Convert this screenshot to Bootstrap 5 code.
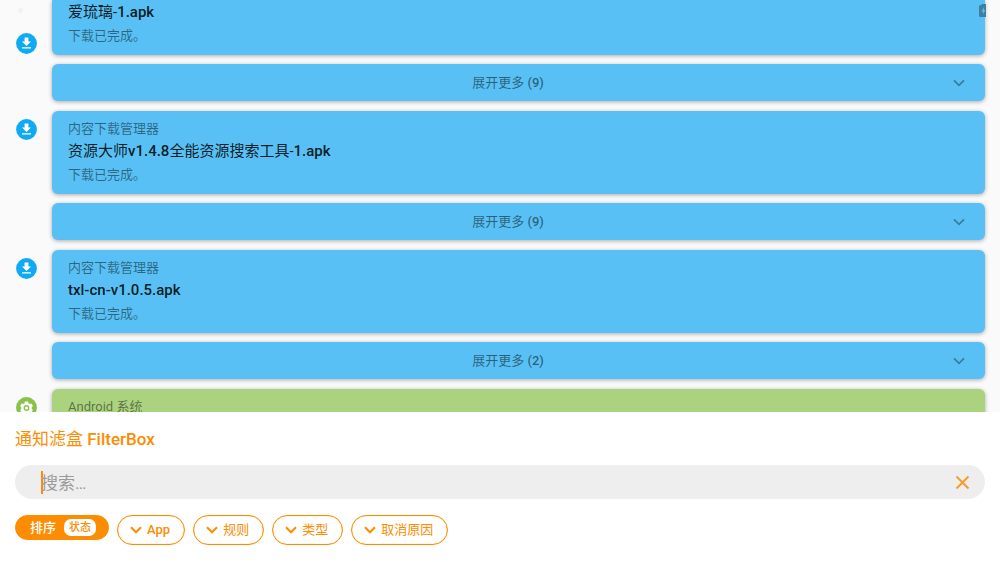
<!DOCTYPE html>
<html lang="zh-CN">
<head>
<meta charset="utf-8">
<meta name="viewport" content="width=device-width, initial-scale=1">
<title>通知滤盒 FilterBox</title>
<link href="https://cdn.jsdelivr.net/npm/bootstrap@5.3.0/dist/css/bootstrap.min.css" rel="stylesheet">
<style>
  :root { --accent: #fd8c00; }
  body { font-family: Roboto, "Noto Sans CJK SC", sans-serif; background: #fafafa; font-size: 13px; }
  /* Latin runs are medium weight, Chinese stays regular */
  .latin { font-weight: 500; }
  .feed { padding: 0 15px 0 16px; min-height: 0; }
  .feed-list { gap: 10px; }
  .entry { gap: 15px; }
  .entry-body { gap: 9px; min-width: 0; }
  .note, .more { border: 0; border-radius: 6px; background: #58c0f4; box-shadow: 0 1px 4px rgba(0,0,0,.32); }
  .note { padding: 6px 16px 8px; line-height: 23px; color: rgba(0,0,0,.48); }
  .note-first { padding-top: 1px; }
  .note h2 { font-size: 15px; line-height: 23px; font-weight: 400; color: rgba(0,0,0,.87); margin: 0; }
  .note-system { background: #abd37f; }
  .more { height: 37px; padding: 0 20px; color: rgba(0,0,0,.5); }
  .more .label { padding-right: 9px; }
  .more svg { color: rgba(0,0,0,.36); }
  .source { width: 21px; height: 21px; margin-top: 8px; flex: none; }
  .source-first { margin-top: 33px; }
  .battery { top: 4px; right: 14px; }
  .dot { top: 8px; left: 18px; width: 5px; height: 5px; background: #f2f2f2; }
  .sheet { padding: 14px 15px 17px; color: var(--accent); position: relative; }
  .sheet h1 { font-size: 17px; line-height: 26px; font-weight: 400; margin: 0 0 13px; }
  .search { height: 34px; background: #eee; border-radius: 17px; padding: 0 15px 0 26px; margin-bottom: 16px; }
  .caret { width: 2px; height: 23px; background: var(--accent); margin-right: -2px; }
  .search input { height: 34px; padding: 2px 0 0; font-size: 17px; color: #555; caret-color: var(--accent); min-width: 0; }
  .search input:focus { outline: 0; }
  .search input::placeholder { color: #9b9b9b; opacity: 1; }
  .clear { line-height: 0; }
  .chip { height: 30px; padding: 0 14px 0 12px; gap: 5px; border: 1px solid var(--accent); border-radius: 15px; color: var(--accent); background: #fff; box-shadow: inset 0 0 1px var(--accent); }
  .chip svg { stroke-width: 2px; }
  .chip-sort { height: 25px; padding: 0 12px 0 14px; gap: 8px; background: var(--accent); color: #fff; font-weight: 500; }
  .state { font-size: 11px; line-height: 17px; padding: 0 5px; border-radius: 7px; background: #fff; color: var(--accent); }
</style>
</head>
<body class="vh-100 d-flex flex-column overflow-hidden">
<svg class="d-none" xmlns="http://www.w3.org/2000/svg">
  <symbol id="download" viewBox="0 0 21 21">
    <circle cx="10.5" cy="10.5" r="10.4" fill="#10a9f4"/>
    <path fill="#fff" d="M8.600 4.600h3.800v4h2.600l-4.500 4.500L6 8.600h2.600zM6 14.300h9v1.200H6z"/>
  </symbol>
  <symbol id="gear" viewBox="0 0 21 21">
    <circle cx="10.5" cy="10.5" r="10.4" fill="#8ac249"/>
    <path fill="#fff" fill-rule="evenodd" d="M8.900 4.600h3.200l.4 1.700 1.200.7 1.700-.5 1.500 2.600-1.200 1.200v1.400l1.200 1.200-1.500 2.600-1.700-.5-1.200.7-.4 1.700H8.900l-.4-1.700-1.200-.7-1.700.5-1.500-2.600 1.200-1.200v-1.400L4.100 9.100l1.500-2.600 1.700.5 1.200-.7zM10.500 8.100a2.900 2.900 0 1 0 0 5.800 2.900 2.900 0 0 0 0-5.800zM10.500 9.400a1.600 1.600 0 1 1 0 3.200 1.600 1.600 0 0 1 0-3.200z"/>
  </symbol>
  <symbol id="chevron" viewBox="0 0 12 8">
    <path fill="none" stroke="currentColor" d="M1 1.300l5 5 5-5"/>
  </symbol>
</svg>

<main class="feed flex-grow-1 overflow-hidden position-relative">
  <div class="feed-list d-flex flex-column">
    <section class="entry d-flex">
      <svg class="source source-first" aria-hidden="true"><use href="#download"/></svg>
      <div class="entry-body flex-grow-1 d-flex flex-column">
        <article class="note note-first rounded-top-0"><h2>爱琉璃-<span class="latin">1.apk</span></h2><div>下载已完成。</div></article>
        <button type="button" class="more d-flex align-items-center"><span class="label flex-grow-1">展开更多 <span class="latin">(9)</span></span><svg width="12" height="8" stroke-width="1.700" aria-hidden="true"><use href="#chevron"/></svg></button>
      </div>
    </section>
    <section class="entry d-flex">
      <svg class="source" aria-hidden="true"><use href="#download"/></svg>
      <div class="entry-body flex-grow-1 d-flex flex-column">
        <article class="note"><div>内容下载管理器</div><h2>资源大师<span class="latin">v1.4.8</span>全能资源搜索工具-<span class="latin">1.apk</span></h2><div>下载已完成。</div></article>
        <button type="button" class="more d-flex align-items-center"><span class="label flex-grow-1">展开更多 <span class="latin">(9)</span></span><svg width="12" height="8" stroke-width="1.700" aria-hidden="true"><use href="#chevron"/></svg></button>
      </div>
    </section>
    <section class="entry d-flex">
      <svg class="source" aria-hidden="true"><use href="#download"/></svg>
      <div class="entry-body flex-grow-1 d-flex flex-column">
        <article class="note"><div>内容下载管理器</div><h2><span class="latin">txl-cn-v1.0.5.apk</span></h2><div>下载已完成。</div></article>
        <button type="button" class="more d-flex align-items-center"><span class="label flex-grow-1">展开更多 <span class="latin">(2)</span></span><svg width="12" height="8" stroke-width="1.700" aria-hidden="true"><use href="#chevron"/></svg></button>
      </div>
    </section>
    <section class="entry d-flex">
      <svg class="source" aria-hidden="true"><use href="#gear"/></svg>
      <div class="entry-body flex-grow-1 d-flex flex-column">
        <article class="note note-system pb-5"><div>Android 系统</div></article>
      </div>
    </section>
  </div>
  <span class="dot position-absolute rounded-circle"></span>
  <svg class="battery position-absolute" width="7" height="13" viewBox="0 0 7 13" aria-hidden="true">
    <path fill="#3f7f9f" d="M2.500 0H7v13H1.200Q0 13 0 11.800V2.400Q0 1.200 1.200 1.200h1.300z"/>
    <path fill="#58c0f4" d="M4.800 3L2.600 7.400h1.500v3L6.200 6H4.800z"/>
  </svg>
</main>

<section class="sheet bg-white">
  <h1>通知滤盒 <span class="latin">FilterBox</span></h1>
  <div class="search d-flex align-items-center">
    <span class="caret"></span>
    <input type="text" class="flex-grow-1 border-0 bg-transparent" placeholder="搜索…" aria-label="搜索">
    <button type="button" class="clear border-0 bg-transparent p-0" aria-label="清除">
      <svg width="15" height="15" viewBox="0 0 15 15"><path d="M1.500 1.500l12 12m0-12l-12 12" fill="none" stroke="#f99a28" stroke-width="1.800"/></svg>
    </button>
  </div>
  <div class="d-flex align-items-start gap-2">
    <button type="button" class="chip chip-sort d-flex align-items-center">排序<span class="state">状态</span></button>
    <button type="button" class="chip d-flex align-items-center"><svg width="12" height="8" aria-hidden="true"><use href="#chevron"/></svg><span class="latin">App</span></button>
    <button type="button" class="chip d-flex align-items-center"><svg width="12" height="8" aria-hidden="true"><use href="#chevron"/></svg>规则</button>
    <button type="button" class="chip d-flex align-items-center"><svg width="12" height="8" aria-hidden="true"><use href="#chevron"/></svg>类型</button>
    <button type="button" class="chip d-flex align-items-center"><svg width="12" height="8" aria-hidden="true"><use href="#chevron"/></svg>取消原因</button>
  </div>
</section>
<script src="https://cdn.jsdelivr.net/npm/bootstrap@5.3.0/dist/js/bootstrap.bundle.min.js"></script>
</body>
</html>
